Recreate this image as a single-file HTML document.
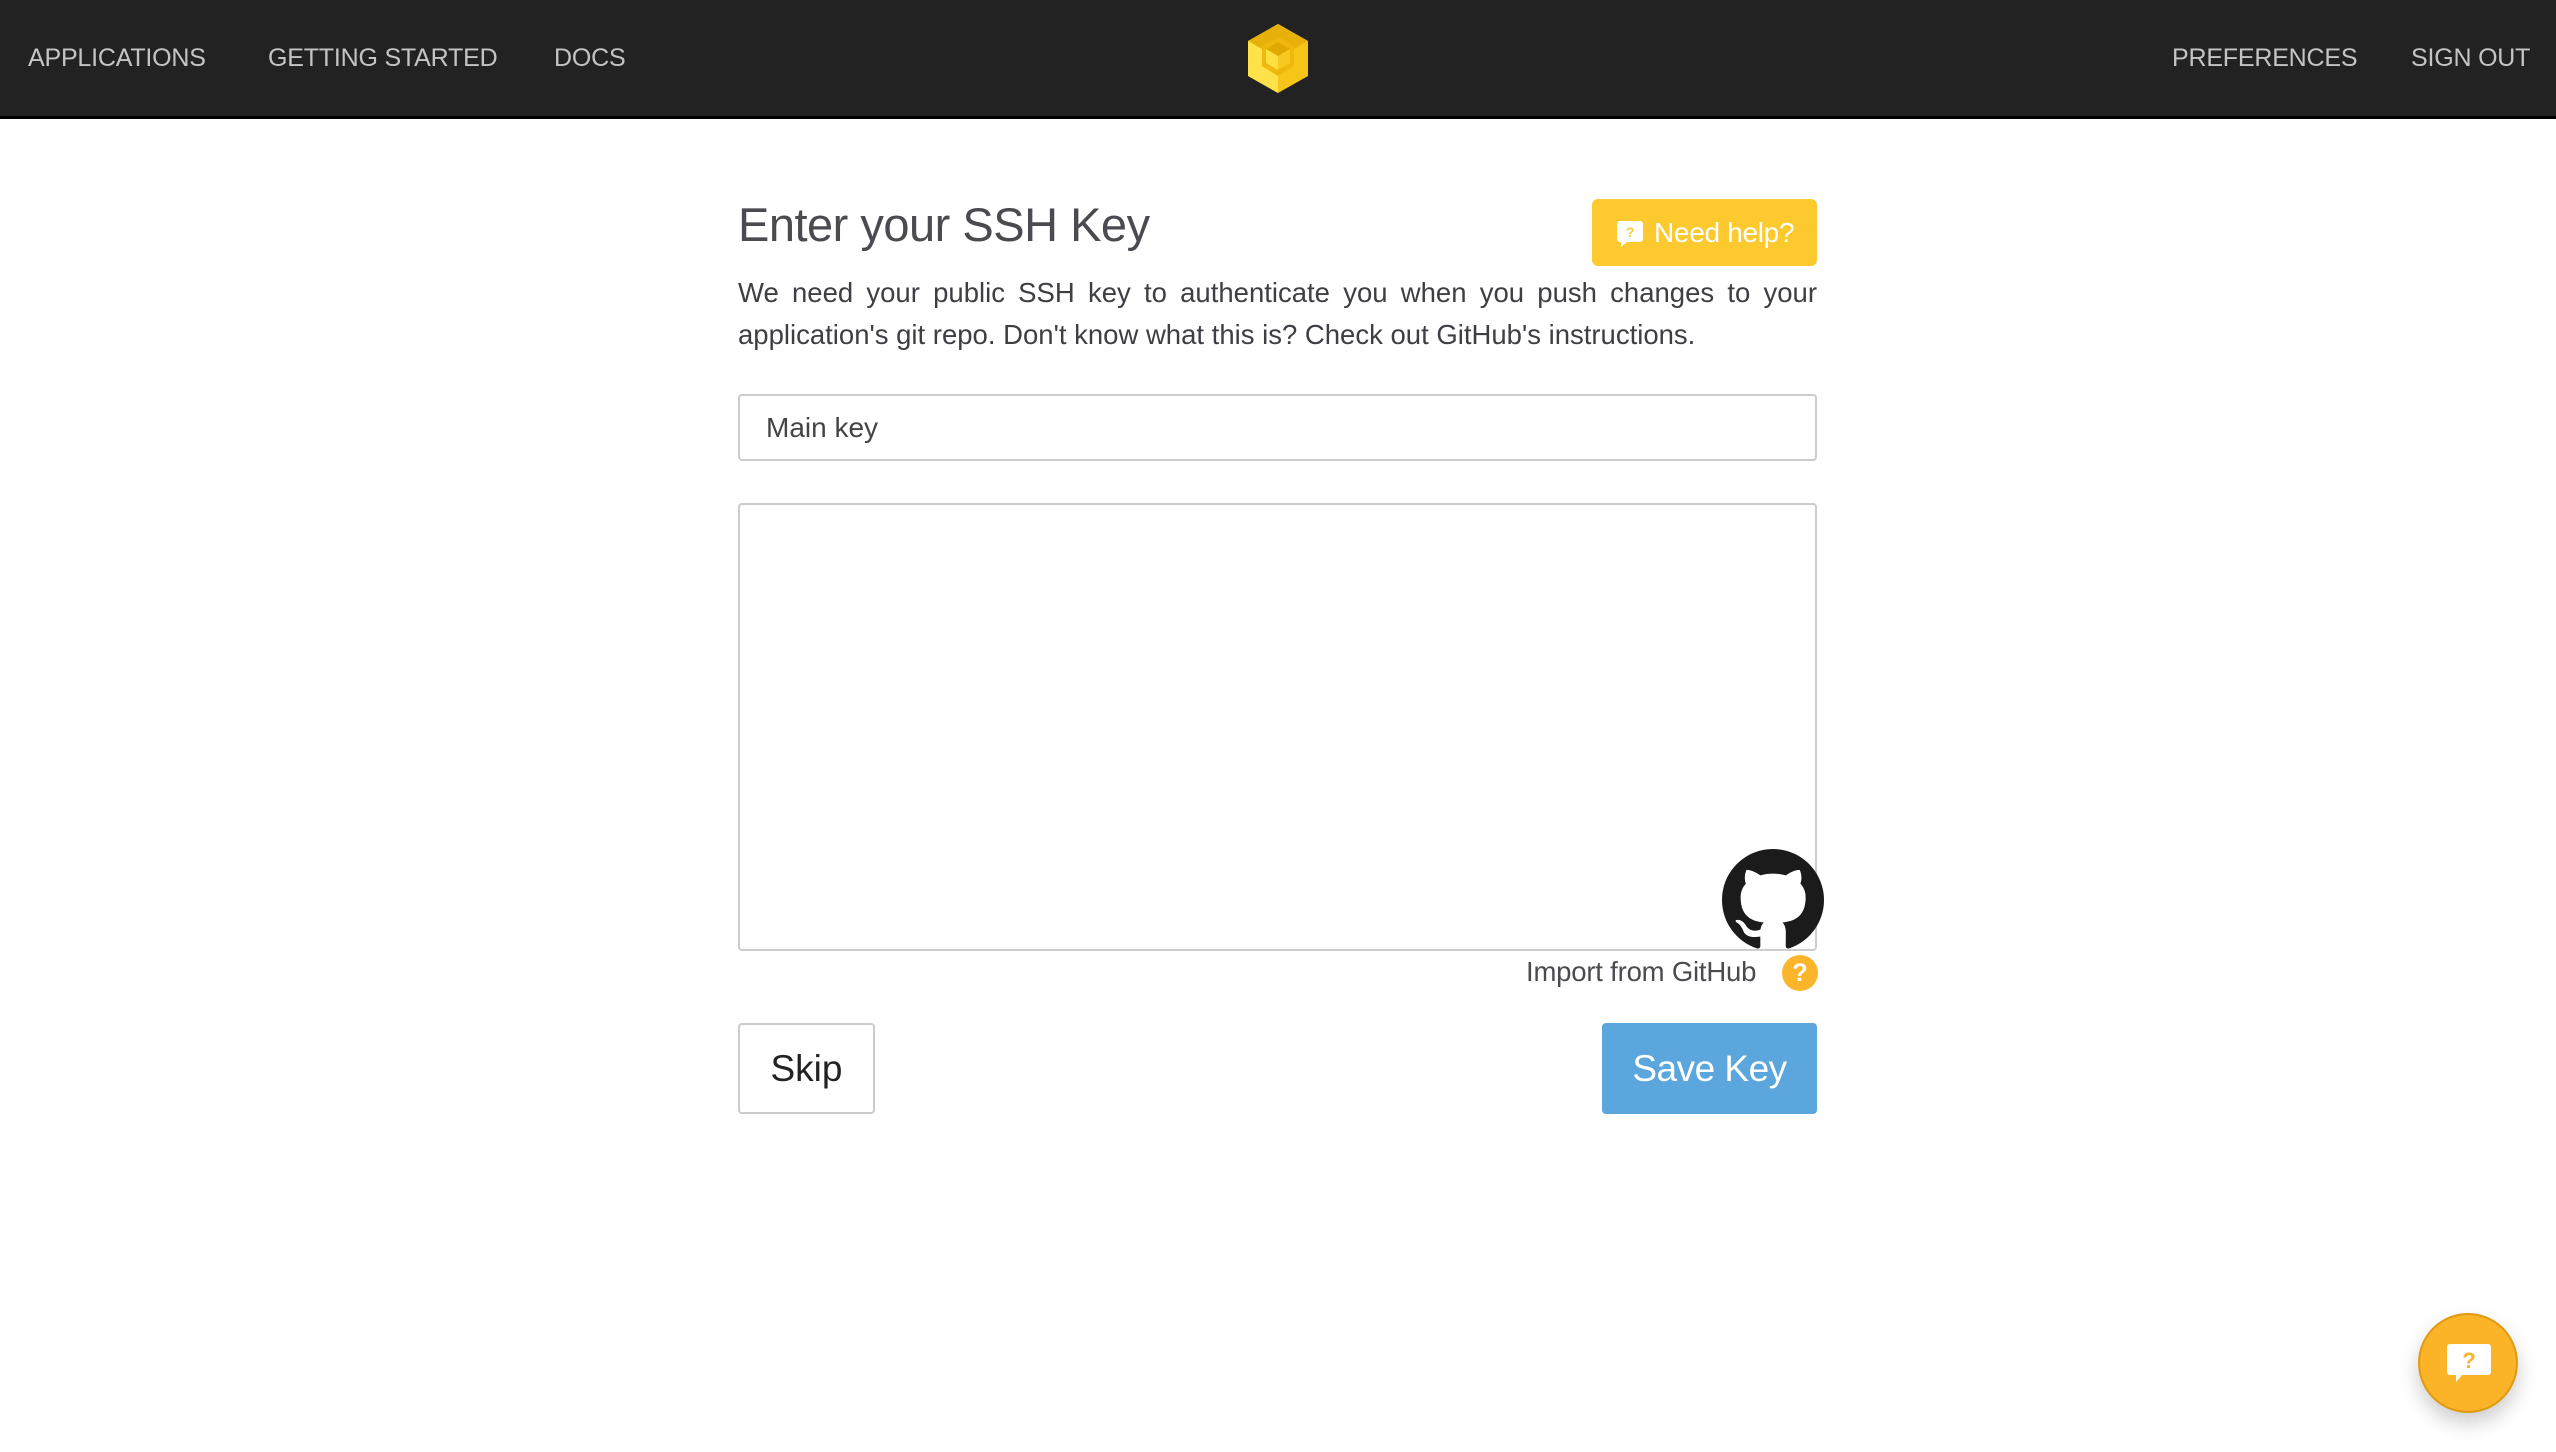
<!DOCTYPE html>
<html><head><meta charset="utf-8"><style>
*{margin:0;padding:0;box-sizing:border-box}
body{width:2556px;height:1452px;background:#fff;font-family:"Liberation Sans",sans-serif;position:relative;overflow:hidden;color:#4a4a50}
.nav{position:absolute;left:0;top:0;width:2556px;height:119px;background:#222;border-bottom:3px solid #000}
.nav span{position:absolute;top:44px;font-size:25px;color:#c4c4c4;letter-spacing:-0.2px}
h1{position:absolute;left:738px;top:197px;font-size:47px;font-weight:normal;color:#4a4a50;letter-spacing:-0.5px}
.help{position:absolute;left:1592px;top:199px;width:225px;height:67px;background:#fcc92f;border-radius:6px;color:#fff;font-size:28px;line-height:67px;padding-left:62px;letter-spacing:-0.3px}
p{position:absolute;left:738px;top:272px;width:1079px;font-size:27.5px;line-height:42px;text-align:justify;text-align-last:left;color:#3e3e44}
.inp{position:absolute;left:738px;top:394px;width:1079px;height:67px;border:2px solid #ccc;border-radius:4px;font-size:28px;line-height:63px;padding-left:26px;color:#444}
.ta{position:absolute;left:738px;top:503px;width:1079px;height:448px;border:2px solid #ccc;border-radius:4px}
.imp{position:absolute;left:1526px;top:956px;font-size:27.5px;color:#4a4a50;letter-spacing:-0.2px}
.q{position:absolute;left:1782px;top:955px;width:36px;height:36px;border-radius:50%;background:#fbb52a;color:#fff;font-size:25px;font-weight:bold;text-align:center;line-height:36px}
.skip{position:absolute;left:738px;top:1023px;width:137px;height:91px;border:2px solid #ccc;border-radius:4px;font-size:37px;line-height:87px;text-align:center;color:#222}
.save{position:absolute;left:1602px;top:1023px;width:215px;height:91px;background:#5aa6dd;border-radius:4px;font-size:37px;line-height:91px;text-align:center;color:#fff;letter-spacing:-0.5px}
.fab{position:absolute;left:2418px;top:1313px;width:100px;height:100px;border-radius:50%;background:#fbb427;border:2px solid #e09a10;box-shadow:0 10px 20px rgba(0,0,0,.2)}
</style></head><body>
<div class="nav">
<span style="left:28px">APPLICATIONS</span>
<span style="left:268px">GETTING STARTED</span>
<span style="left:554px">DOCS</span>
<span style="left:2172px">PREFERENCES</span>
<span style="left:2411px">SIGN OUT</span>
<svg style="position:absolute;left:1248px;top:24px" width="60" height="70" viewBox="0 0 60 70">
<polygon points="30,0 60,17 60,52 30,69 0,52 0,17" fill="#f5c518"/>
<polygon points="30,0 60,17 30,34 0,17" fill="#e8b10a"/>
<polygon points="0,17 30,34 30,69 0,52" fill="#ffe14a"/>
<polygon points="30,13 46,22 46,42 30,52 14,42 14,22" fill="#f0b80c"/>
<polygon points="30,18 42,25 30,32 18,25" fill="#e0a800"/>
<polygon points="18,25 30,32 30,46 18,39" fill="#ffe040"/>
<polygon points="42,25 30,32 30,46 42,39" fill="#f8c820"/>
</svg>
</div>
<h1>Enter your SSH Key</h1>
<div class="help"><svg style="position:absolute;left:25px;top:22px" width="26" height="26" viewBox="0 0 26 26"><path d="M3 0h20a3 3 0 0 1 3 3v15a3 3 0 0 1-3 3H10l-6 5v-5H3a3 3 0 0 1-3-3V3a3 3 0 0 1 3-3z" fill="#fff"/><text x="13" y="16" font-size="14" font-weight="bold" fill="#fcc92f" text-anchor="middle" font-family="Liberation Sans">?</text></svg>Need help?</div>
<p>We need your public SSH key to authenticate you when you push changes to your application's git repo. Don't know what this is? Check out GitHub's instructions.</p>
<div class="inp">Main key</div>
<div class="ta"></div>
<svg style="position:absolute;left:1722px;top:849px" width="102" height="102" viewBox="0 0 16 16"><path fill="#1b1b1b" d="M8 0C3.58 0 0 3.58 0 8c0 3.540 2.29 6.530 5.470 7.590.4.07.55-.17.55-.38 0-.19-.01-.82-.01-1.490-2.010.37-2.530-.49-2.690-.94-.09-.23-.48-.94-.82-1.130-.28-.15-.68-.52-.01-.53.63-.01 1.080.58 1.230.82.72 1.210 1.870.87 2.330.66.07-.52.28-.87.51-1.070-1.780-.2-3.640-.89-3.640-3.950 0-.87.31-1.590.82-2.150-.08-.2-.36-1.020.08-2.120 0 0 .67-.21 2.200.82.64-.18 1.320-.27 2-.27.68 0 1.360.09 2 .27 1.530-1.040 2.200-.82 2.200-.82.44 1.100.16 1.920.08 2.120.51.56.82 1.270.82 2.150 0 3.070-1.870 3.750-3.650 3.950.29.25.54.73.54 1.480 0 1.070-.01 1.930-.01 2.200 0 .21.15.46.55.38A8.013 8.013 0 0 0 16 8c0-4.420-3.580-8-8-8z"/></svg>
<div class="imp">Import from GitHub</div>
<div class="q">?</div>
<div class="skip">Skip</div>
<div class="save">Save Key</div>
<div class="fab"><svg style="position:absolute;left:26px;top:26px" width="46" height="46" viewBox="0 0 46 46"><path d="M4 3h38a3 3 0 0 1 3 3v25a3 3 0 0 1-3 3H16l-6 7v-7H4a3 3 0 0 1-3-3V6a3 3 0 0 1 3-3z" fill="#fff"/><text x="23" y="27" font-size="22" font-weight="bold" fill="#fbb427" text-anchor="middle" font-family="Liberation Sans">?</text></svg></div>
</body></html>
